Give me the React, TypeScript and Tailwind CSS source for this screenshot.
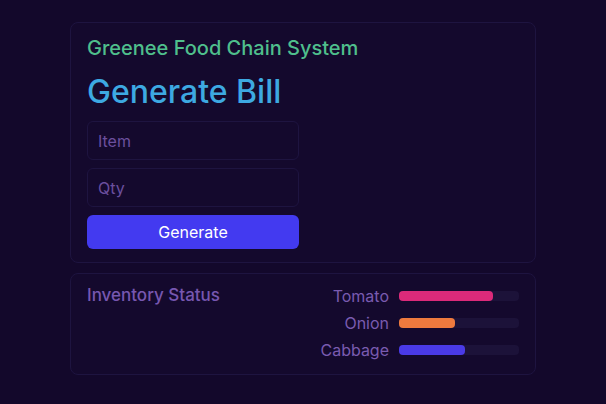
const stock = [
  { name: 'Tomato', pct: 78, color: 'bg-[#dc2a7a]' },
  { name: 'Onion', pct: 47, color: 'bg-[#ef7a3e]' },
  { name: 'Cabbage', pct: 55, color: 'bg-[#4a3ae6]' },
]

export default function App() {
  return (
    <div className="min-h-[404px] w-full bg-[#13082b] px-[70px] pt-[22px] font-['Inter',sans-serif]">
      <div className="rounded-lg border border-[#1e1440] bg-[#14092d] px-[16px] pt-[12px] pb-[13px]">
        <h2 className="text-[20px] font-medium leading-[26px] text-[#4fbf8c]">Greenee Food Chain System</h2>
        <h1 className="mt-[12px] text-[32px] font-medium leading-[38px] text-[#3da9e2]">Generate Bill</h1>
        <div className="mt-[10px] flex w-[212px] flex-col gap-[8px]">
          <input
            className="h-[39px] rounded-md border border-[#1e1440] bg-[#14092d] px-[10px] text-[16px] text-[#7a5bb0] placeholder:text-[#6b4f9e] outline-none"
            placeholder="Item"
          />
          <input
            className="h-[39px] rounded-md border border-[#1e1440] bg-[#14092d] px-[10px] text-[16px] text-[#7a5bb0] placeholder:text-[#6b4f9e] outline-none"
            placeholder="Qty"
          />
          <button className="h-[34px] rounded-md bg-[#433af0] text-[16px] text-white">Generate</button>
        </div>
      </div>

      <div className="mt-[10px] flex justify-between rounded-lg border border-[#1e1440] bg-[#14092d] px-[16px] pt-[10px] pb-[14px]">
        <h3 className="text-[17px] font-medium leading-[22px] text-[#7757b0]">Inventory Status</h3>
        <div className="flex flex-col gap-[7px] pt-[2px]">
          {stock.map((s) => (
            <div key={s.name} className="flex items-center gap-[10px]">
              <span className="w-[80px] text-right text-[16px] leading-[20px] text-[#7a5bb0]">{s.name}</span>
              <div className="h-[10px] w-[120px] rounded-sm bg-[#1c1239]">
                <div className={`h-full rounded-sm ${s.color}`} style={{ width: `${s.pct}%` }} />
              </div>
            </div>
          ))}
        </div>
      </div>
    </div>
  )
}
